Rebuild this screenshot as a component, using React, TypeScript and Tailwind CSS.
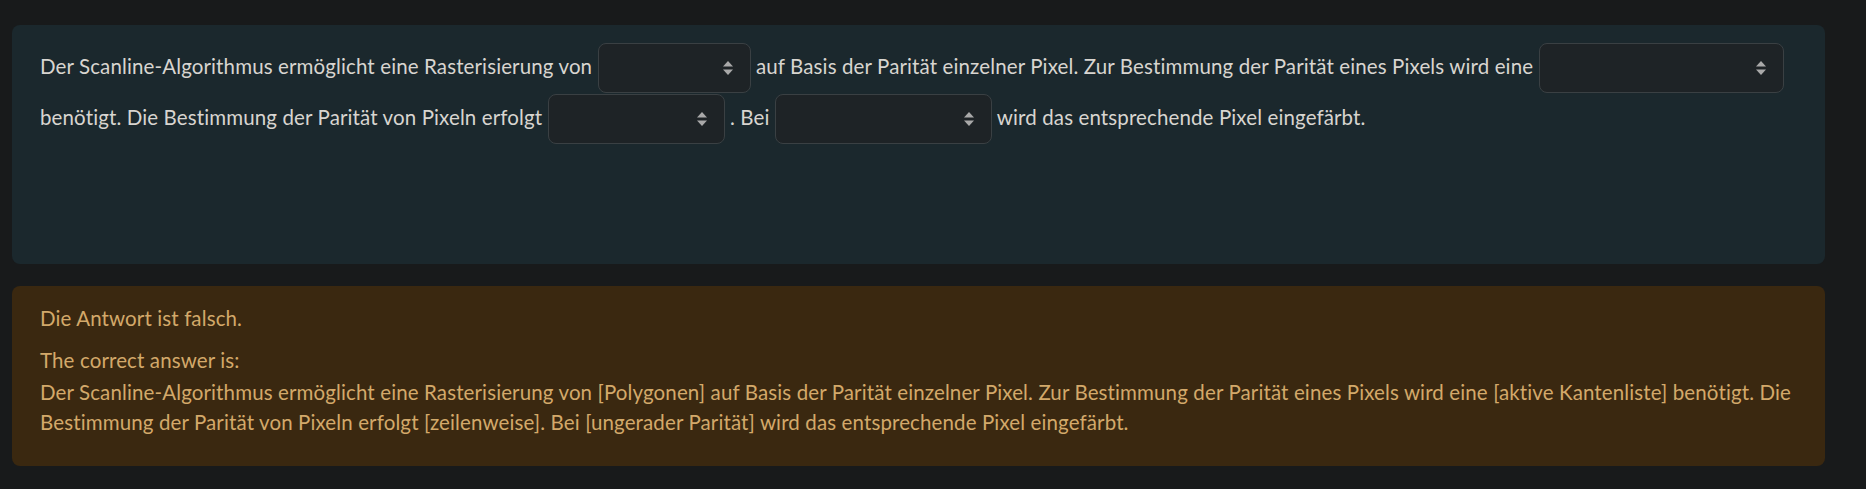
import React from 'react';

const SelectBox: React.FC<{ width: string }> = ({ width }) => {
  return (
    <span className="relative mb-px inline-block align-middle">
      <select
        className={`block h-[50px] ${width} appearance-none rounded-lg border border-[#3a4043] bg-[#1e2326] px-3 text-[#d8d5d0] outline-none`}
        defaultValue=""
      >
        <option value=""></option>
      </select>
      <svg
        className="pointer-events-none absolute right-[18px] top-1/2 -translate-y-1/2"
        width="10"
        height="14"
        viewBox="0 0 10 14"
      >
        <polygon points="5,0 10,5.5 0,5.5" fill="#a9a9a9" />
        <polygon points="0,8.5 10,8.5 5,14" fill="#a9a9a9" />
      </svg>
    </span>
  );
};

export default function App() {
  return (
    <div className="min-h-screen bg-[#181a1b] pl-[12px] pr-[41px] pt-[25px] pb-[23px] font-['Lato',sans-serif] text-[20.5px] tracking-[0.12px]">
      <div className="h-[239px] rounded-lg bg-[#1b282d] px-[28px] pt-[18px] text-[#d8d5d0]">
        <p className="leading-[30px]">
          Der Scanline-Algorithmus ermöglicht eine Rasterisierung von <SelectBox width="w-[153px]" /> auf
          Basis der Parität einzelner Pixel. Zur Bestimmung der Parität eines Pixels wird eine{' '}
          <SelectBox width="w-[245px]" /> benötigt. Die Bestimmung der Parität von Pixeln erfolgt{' '}
          <SelectBox width="w-[177px]" /> . Bei <SelectBox width="w-[217px]" /> wird das entsprechende
          Pixel eingefärbt.
        </p>
      </div>

      <div className="mt-[22px] rounded-lg bg-[#3a2810] px-[28px] pt-[17px] pb-[29px] leading-[30px] text-[#d3a96a]">
        <div>Die Antwort ist falsch.</div>
        <div className="mt-[12px]">The correct answer is:</div>
        <div className="mt-[2px]">
          Der Scanline-Algorithmus ermöglicht eine Rasterisierung von [Polygonen] auf Basis der Parität
          einzelner Pixel. Zur Bestimmung der Parität eines Pixels wird eine [aktive Kantenliste] benötigt.
          Die Bestimmung der Parität von Pixeln erfolgt [zeilenweise]. Bei [ungerader Parität] wird das
          entsprechende Pixel eingefärbt.
        </div>
      </div>
    </div>
  );
}
